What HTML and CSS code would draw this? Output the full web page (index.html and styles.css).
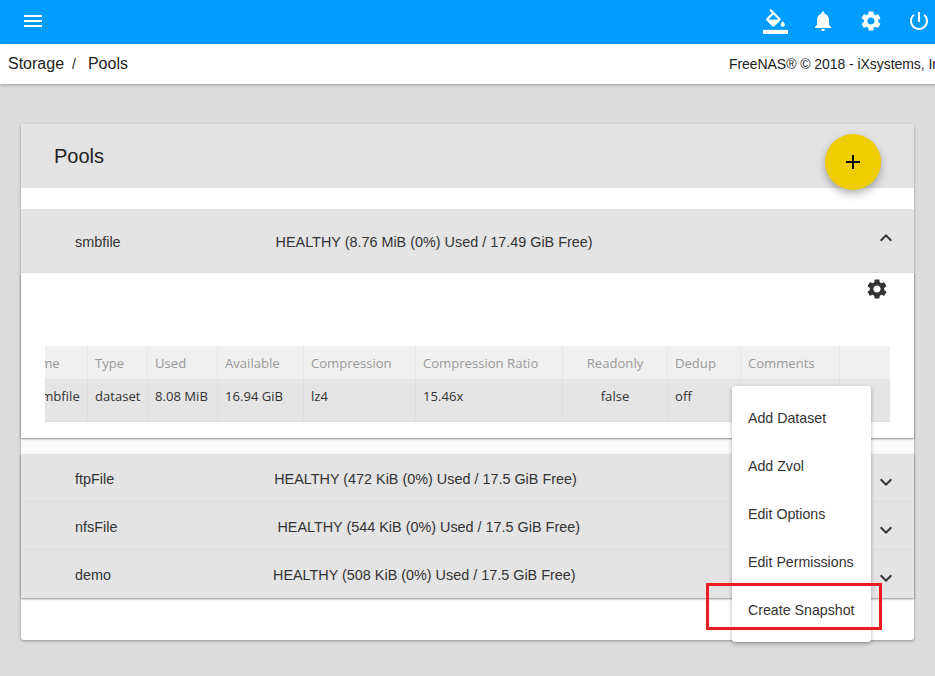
FILE: index.html
```html
<!DOCTYPE html>
<html lang="en">
<head>
<meta charset="utf-8">
<title>Storage / Pools</title>
<link rel="stylesheet" href="styles.css">
</head>
<body>
<header class="topbar">
  <button class="icon-btn menu-btn" aria-label="Menu"><svg viewBox="0 0 24 24"><path d="M3 18h18v-2H3v2zm0-5h18v-2H3v2zm0-7v2h18V6H3z"/></svg></button>
  <div class="top-actions">
    <button class="icon-btn" aria-label="Theme"><svg class="paint" viewBox="0 0 24 24"><path d="M16.56 8.94L7.62 0 6.21 1.41l2.38 2.38-5.15 5.15c-.59.59-.59 1.54 0 2.12l5.5 5.5c.29.29.68.44 1.06.44s.77-.15 1.06-.44l5.5-5.5c.59-.58.59-1.53 0-2.12zM5.21 10L10 5.21 14.79 10H5.21zM19 11.5s-2 2.17-2 3.5c0 1.1.9 2 2 2s2-.9 2-2c0-1.33-2-3.5-2-3.5z"/><path d="M0 20h24v4H0z"/></svg></button>
    <button class="icon-btn" aria-label="Alerts"><svg viewBox="0 0 24 24"><path d="M12 22c1.1 0 2-.9 2-2h-4c0 1.1.89 2 2 2zm6-6v-5c0-3.07-1.64-5.64-4.5-6.32V4c0-.83-.67-1.5-1.5-1.5s-1.5.67-1.5 1.5v.68C7.63 5.36 6 7.92 6 11v5l-2 2v1h16v-1l-2-2z"/></svg></button>
    <button class="icon-btn" aria-label="Settings"><svg viewBox="0 0 24 24"><path d="M19.14 12.94c.04-.3.06-.61.06-.94 0-.32-.02-.64-.07-.94l2.03-1.58c.18-.14.23-.41.12-.61l-1.92-3.32c-.12-.22-.37-.29-.59-.22l-2.39.96c-.5-.38-1.03-.7-1.62-.94l-.36-2.54c-.04-.24-.24-.41-.48-.41h-3.84c-.24 0-.43.17-.47.41l-.36 2.54c-.59.24-1.13.57-1.62.94l-2.39-.96c-.22-.08-.47 0-.59.22L2.74 8.87c-.12.21-.08.47.12.61l2.03 1.58c-.05.3-.09.63-.09.94s.02.64.07.94l-2.03 1.58c-.18.14-.23.41-.12.61l1.92 3.32c.12.22.37.29.59.22l2.39-.96c.5.38 1.03.7 1.62.94l.36 2.54c.05.24.24.41.48.41h3.84c.24 0 .44-.17.47-.41l.36-2.54c.59-.24 1.13-.56 1.62-.94l2.39.96c.22.08.47 0 .59-.22l1.92-3.32c.12-.22.07-.47-.12-.61l-2.01-1.58zM12 15.6c-1.98 0-3.6-1.62-3.6-3.6s1.62-3.6 3.6-3.6 3.6 1.62 3.6 3.6-1.62 3.6-3.6 3.6z"/></svg></button>
    <button class="icon-btn" aria-label="Power"><svg viewBox="0 0 24 24"><path d="M13 3h-2v10h2V3zm4.83 2.17l-1.42 1.42C17.99 7.86 19 9.81 19 12c0 3.87-3.13 7-7 7s-7-3.13-7-7c0-2.19 1.01-4.14 2.58-5.42L6.17 5.17C4.23 6.82 3 9.26 3 12c0 4.97 4.03 9 9 9s9-4.03 9-9c0-2.74-1.23-5.18-3.17-6.83z"/></svg></button>
  </div>
</header>
<nav class="crumbbar">
  <div class="crumbs"><span>Storage</span><span class="crumb-sep">/</span><span>Pools</span></div>
  <div class="copyright">FreeNAS® © 2018 - iXsystems, Inc</div>
</nav>
<main class="content">
  <section class="card">
    <div class="card-head"><h1 class="card-title">Pools</h1></div>
    <button class="fab" aria-label="Add pool"><svg viewBox="0 0 24 24"><path d="M19 13h-6v6h-2v-6H5v-2h6V5h2v6h6v2z"/></svg></button>
    <div class="card-gap"></div>

    <div class="pool-row pool-row-tall">
      <span class="pool-name pool-name-first">smbfile</span>
      <span class="pool-status">HEALTHY (8.76 MiB (0%) Used / 17.49 GiB Free)</span>
      <svg class="chevron chevron-up" viewBox="0 0 24 24"><path d="M12 8l-6 6 1.41 1.41L12 10.83l4.59 4.58L18 14z"/></svg>
    </div>
    <div class="pool-body">
      <div class="pool-tools"><svg class="gear" viewBox="0 0 24 24"><path d="M19.14 12.94c.04-.3.06-.61.06-.94 0-.32-.02-.64-.07-.94l2.03-1.58c.18-.14.23-.41.12-.61l-1.92-3.32c-.12-.22-.37-.29-.59-.22l-2.39.96c-.5-.38-1.03-.7-1.62-.94l-.36-2.54c-.04-.24-.24-.41-.48-.41h-3.84c-.24 0-.43.17-.47.41l-.36 2.54c-.59.24-1.13.57-1.62.94l-2.39-.96c-.22-.08-.47 0-.59.22L2.74 8.87c-.12.21-.08.47.12.61l2.03 1.58c-.05.3-.09.63-.09.94s.02.64.07.94l-2.03 1.58c-.18.14-.23.41-.12.61l1.92 3.32c.12.22.37.29.59.22l2.39-.96c.5.38 1.03.7 1.62.94l.36 2.54c.05.24.24.41.48.41h3.84c.24 0 .44-.17.47-.41l.36-2.54c.59-.24 1.13-.56 1.62-.94l2.39.96c.22.08.47 0 .59-.22l1.92-3.32c.12-.22.07-.47-.12-.61l-2.01-1.58zM12 15.6c-1.98 0-3.6-1.62-3.6-3.6s1.62-3.6 3.6-3.6 3.6 1.62 3.6 3.6-1.62 3.6-3.6 3.6z"/></svg></div>
      <div class="table-clip">
        <div class="table">
          <div class="th th-name">Name</div><div class="th">Type</div><div class="th">Used</div><div class="th">Available</div><div class="th">Compression</div><div class="th">Compression Ratio</div><div class="th th-center">Readonly</div><div class="th">Dedup</div><div class="th">Comments</div><div class="th"></div>
          <div class="td">smbfile</div><div class="td">dataset</div><div class="td">8.08 MiB</div><div class="td">16.94 GiB</div><div class="td">lz4</div><div class="td">15.46x</div><div class="td td-center">false</div><div class="td">off</div><div class="td"></div><div class="td"></div>
        </div>
      </div>
    </div>

    <div class="pool-gap"></div>
    <div class="pool-list">
      <div class="pool-row">
        <span class="pool-name">ftpFile</span>
        <span class="pool-status">HEALTHY (472 KiB (0%) Used / 17.5 GiB Free)</span>
        <svg class="chevron chevron-down" viewBox="0 0 24 24"><path d="M16.59 8.59L12 13.17 7.41 8.59 6 10l6 6 6-6z"/></svg>
      </div>
      <div class="pool-row">
        <span class="pool-name">nfsFile</span>
        <span class="pool-status">HEALTHY (544 KiB (0%) Used / 17.5 GiB Free)</span>
        <svg class="chevron chevron-down" viewBox="0 0 24 24"><path d="M16.59 8.59L12 13.17 7.41 8.59 6 10l6 6 6-6z"/></svg>
      </div>
      <div class="pool-row">
        <span class="pool-name pool-name-demo">demo</span>
        <span class="pool-status">HEALTHY (508 KiB (0%) Used / 17.5 GiB Free)</span>
        <svg class="chevron chevron-down" viewBox="0 0 24 24"><path d="M16.59 8.59L12 13.17 7.41 8.59 6 10l6 6 6-6z"/></svg>
      </div>
    </div>

    <div class="menu">
      <div class="menu-item">Add Dataset</div>
      <div class="menu-item">Add Zvol</div>
      <div class="menu-item">Edit Options</div>
      <div class="menu-item">Edit Permissions</div>
      <div class="menu-item">Create Snapshot</div>
    </div>
    <div class="annotation"></div>
  </section>
</main>
</body>
</html>
```

FILE: styles.css
```css
* { box-sizing: border-box; }

html, body {
  margin: 0;
  height: 676px;
  overflow: hidden;
}

body {
  background: #dcdcdc;
  font-family: "Liberation Sans", Arial, sans-serif;
  color: #212121;
}

.topbar {
  height: 44px;
  background: #009dff;
  display: flex;
  justify-content: space-between;
  align-items: center;
  width: 943px;
}

.top-actions { display: flex; }

.icon-btn {
  width: 48px;
  height: 44px;
  padding: 0;
  border: 0;
  background: none;
  display: flex;
  align-items: center;
  justify-content: center;
  margin-top: -2px;
}

.menu-btn { margin-left: 9px; }

.icon-btn svg {
  width: 24px;
  height: 24px;
  fill: #fff;
}

.icon-btn .paint {
  width: 25px;
  height: 25px;
  margin-top: 1px;
}

.crumbbar {
  height: 40px;
  background: #fff;
  box-shadow: 0 1px 3px rgba(0, 0, 0, .3);
  display: flex;
  align-items: center;
  justify-content: space-between;
  padding-left: 8px;
  white-space: nowrap;
  width: 1000px;
  position: relative;
}

.crumbs {
  display: flex;
  font-size: 16px;
  color: #222;
}

.crumb-sep {
  font-size: 14px;
  padding: 1px 12px 0 8px;
}

.copyright {
  font-size: 14px;
  letter-spacing: -.06px;
  color: #222;
  width: 271px;
}

.content { padding: 40px 21px 0; }

.card {
  position: relative;
  width: 893px;
  height: 516px;
  background: #fff;
  border-radius: 3px;
  box-shadow: 0 1px 3px rgba(0, 0, 0, .35);
}

.card-head {
  height: 64px;
  background: #e3e3e3;
  border-radius: 3px 3px 0 0;
  padding: 20px 33px 0;
}

.card-title {
  margin: 0;
  font-size: 20px;
  line-height: 24px;
  font-weight: 400;
  color: #222;
}

.fab {
  position: absolute;
  top: 10px;
  left: 804px;
  width: 56px;
  height: 56px;
  padding: 16px;
  border: 0;
  border-radius: 50%;
  background: #f0cd00;
  box-shadow: 0 4px 8px rgba(0, 0, 0, .3);
}

.fab svg { display: block; width: 24px; height: 24px; fill: #000; }

.card-gap { height: 21px; }

.pool-row {
  height: 48px;
  background: #e4e4e4;
  display: flex;
  align-items: center;
  padding: 2px 0 0 54px;
  font-size: 14.4px;
  color: #333;
  position: relative;
  border-bottom: 1px solid #dcdcdc;
}

.pool-row-tall { height: 64px; border-bottom: 0; }

.pool-name { margin-right: 160px; }
.pool-name-first { margin-right: 155px; }
.pool-name-demo { margin-right: 162px; }

.chevron {
  position: absolute;
  left: 853px;
  width: 24px;
  height: 24px;
  fill: #333;
}

.chevron-up { top: 17px; }
.chevron-down { top: 16px; }

.pool-body {
  height: 165px;
  background: #fff;
  box-shadow: 0 1px 2px rgba(0, 0, 0, .45);
  position: relative;
}

.pool-tools {
  height: 73px;
  padding: 4px 0 0 844px;
}

.gear { display: block; width: 24px; height: 24px; fill: #333; }

.table-clip {
  margin: 0 24px;
  overflow: hidden;
}

.table {
  margin-left: -17px;
  display: grid;
  grid-template-columns: 60px 60px 70px 86px 112px 147px 105px 73px 99px 51px;
  grid-template-rows: 33px 43px;
  font-family: "Open Sans", sans-serif;
  font-size: 13.1px;
}

.th, .td {
  padding: 0 0 0 7px;
  border-right: 1px solid #dedede;
  white-space: nowrap;
}

.th {
  background: #f0f0f0;
  color: #999;
  line-height: 34px;
  border-right-color: #e6e6e6;
}

.th-name { text-indent: -12px; }

.td {
  background: #e5e5e5;
  color: #333;
  line-height: 34px;
  border-bottom: 1px solid #dddddd;
}

.th-center, .td-center { text-align: center; padding: 0; }

.pool-gap { height: 16px; background: #fbfbfb; }

.pool-list {
  box-shadow: 0 1px 2px rgba(0, 0, 0, .45);
  position: relative;
}

.pool-list .pool-row:last-child { border-bottom: 0; }

.menu {
  position: absolute;
  left: 711px;
  top: 262px;
  width: 139px;
  height: 256px;
  padding-top: 8px;
  background: #fff;
  border-radius: 3px;
  box-shadow: 0 2px 4px rgba(0, 0, 0, .3);
}

.menu-item {
  height: 48px;
  line-height: 48px;
  padding-left: 16px;
  font-size: 14.2px;
  color: #333;
}

.annotation {
  position: absolute;
  left: 685px;
  top: 459px;
  width: 176px;
  height: 47px;
  border: 3px solid #ed1c24;
}
```
